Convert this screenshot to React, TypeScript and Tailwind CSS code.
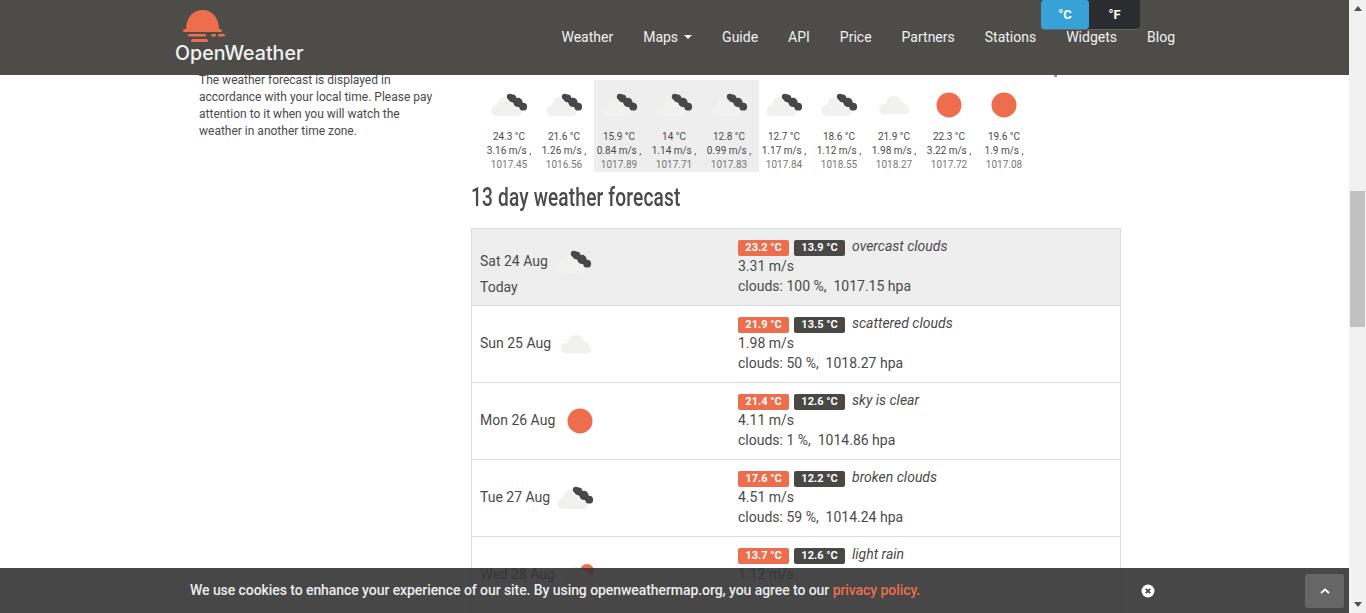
import React from "react";

function LightCloud({ fill = "#f1f1ef" }: { fill?: string }) {
  return (
    <g fill={fill}>
      <circle cx="25" cy="24" r="8" />
      <circle cx="33" cy="27.5" r="5" />
      <circle cx="15" cy="29" r="5.3" />
      <rect x="15" y="27" width="21" height="7.3" />
      <circle cx="36" cy="30" r="4.3" />
    </g>
  );
}

function BigCloud() {
  return (
    <g fill="#f1f1ef">
      <circle cx="21.5" cy="25" r="8.3" />
      <circle cx="30" cy="27" r="6" />
      <circle cx="13" cy="30.5" r="5.5" />
      <circle cx="33" cy="31" r="5" />
      <rect x="13" y="28" width="20" height="8" />
    </g>
  );
}

const blobs: [number, number, number][] = [
  [25.8, 16.8, 3],
  [28.5, 18.3, 3.9],
  [34, 22.4, 4.6],
  [39.2, 26.7, 3.9],
];

function DarkCloud() {
  return (
    <g fill="#48484a">
      {blobs.map(([x, y, r]) => (
        <circle key={x} cx={x} cy={y} r={r} />
      ))}
      <path d="M26 17 L39 26.5" stroke="#48484a" strokeWidth="5.6" fill="none" />
    </g>
  );
}

function Icon({ kind }: { kind: string }) {
  return (
    <svg viewBox="0 0 50 50" className="h-[50px] w-[50px] shrink-0">
      <defs>
        <mask id="cut">
          <rect width="50" height="50" fill="#ffffff" />
          <path d="M26 17 L39 26.5" stroke="#000000" strokeWidth="9" strokeLinecap="round" fill="none" />
        </mask>
      </defs>
      {kind === "dark" && (
        <>
          <g mask="url(#cut)">
            <BigCloud />
          </g>
          <DarkCloud />
        </>
      )}
      {kind === "light" && <LightCloud />}
      {kind === "sun" && <circle cx="25" cy="25" r="12.5" fill="#ec6e4c" />}
      {kind === "rain" && (
        <>
          <circle cx="32" cy="21" r="7" fill="#ec6e4c" />
          <BigCloud />
          <g fill="#48484a">
            <circle cx="18" cy="39" r="0.8" />
            <circle cx="22" cy="38" r="0.8" />
            <circle cx="26" cy="39" r="0.8" />
            <circle cx="20" cy="42" r="0.8" />
            <circle cx="24" cy="42" r="0.8" />
          </g>
        </>
      )}
    </svg>
  );
}

const hours = [
  ["dark", "24.3 °C", "3.16 m/s ,", "1017.45"],
  ["dark", "21.6 °C", "1.26 m/s ,", "1016.56"],
  ["dark", "15.9 °C", "0.84 m/s ,", "1017.89"],
  ["dark", "14 °C", "1.14 m/s ,", "1017.71"],
  ["dark", "12.8 °C", "0.99 m/s ,", "1017.83"],
  ["dark", "12.7 °C", "1.17 m/s ,", "1017.84"],
  ["dark", "18.6 °C", "1.12 m/s ,", "1018.55"],
  ["light", "21.9 °C", "1.98 m/s ,", "1018.27"],
  ["sun", "22.3 °C", "3.22 m/s ,", "1017.72"],
  ["sun", "19.6 °C", "1.9 m/s ,", "1017.08"],
];

const days = [
  { d: "Sat 24 Aug", today: true, i: "dark", hi: "23.2 °C", lo: "13.9 °C", desc: "overcast clouds", w: "3.31 m/s", c: "clouds: 100 %,  1017.15 hpa" },
  { d: "Sun 25 Aug", i: "light", hi: "21.9 °C", lo: "13.5 °C", desc: "scattered clouds", w: "1.98 m/s", c: "clouds: 50 %,  1018.27 hpa" },
  { d: "Mon 26 Aug", i: "sun", hi: "21.4 °C", lo: "12.6 °C", desc: "sky is clear", w: "4.11 m/s", c: "clouds: 1 %,  1014.86 hpa" },
  { d: "Tue 27 Aug", i: "dark", hi: "17.6 °C", lo: "12.2 °C", desc: "broken clouds", w: "4.51 m/s", c: "clouds: 59 %,  1014.24 hpa" },
  { d: "Wed 28 Aug", i: "rain", hi: "13.7 °C", lo: "12.6 °C", desc: "light rain", w: "1.12 m/s", c: "" },
];

const nav = ["Weather", "Maps", "Guide", "API", "Price", "Partners", "Stations", "Widgets", "Blog"];

export default function App() {
  return (
    <div className="relative flex h-[613px] w-[1366px] overflow-hidden bg-white font-[Roboto,sans-serif] text-[#4a4a4a]">
      <div className="relative flex w-[1349px] flex-col">
        <header className="relative z-10 flex h-[75px] shrink-0 items-start justify-between bg-[#4e4c48] pl-[175px] pr-[174px]">
          <div className="flex flex-col pt-[10px]">
            <svg viewBox="0 0 50 33" className="ml-[8px] h-[33px] w-[50px]">
              <path d="M3 20 C3 8 9.5 0 19.5 0 C29.5 0 36 8 36 20 Z" fill="#ec6e4c" />
              <g fill="#ec6e4c">
                <rect x="0" y="19" width="39" height="3" rx="1.5" />
                <rect x="5" y="24" width="18" height="2.6" rx="1.3" />
                <rect x="28" y="24" width="5" height="2.6" rx="1.3" />
                <rect x="35" y="24" width="7" height="2.6" rx="1.3" />
                <rect x="8" y="29" width="17" height="3" rx="1.5" />
              </g>
            </svg>
            <span className="mt-[-2px] font-[Inter,sans-serif] text-[19.6px] font-medium leading-[24px] text-[#f2f2f2]">OpenWeather</span>
          </div>
          <nav className="flex items-center gap-[30px] pt-[28px] text-[14px] leading-[18px] text-[#f2f2f2]">
            {nav.map((n) => (
              <span key={n} className="flex items-center">
                {n}
                {n === "Maps" && <span className="ml-[6px] h-0 w-0 border-x-[4px] border-t-[4px] border-x-transparent border-t-[#f2f2f2]" />}
              </span>
            ))}
          </nav>
          <div className="absolute left-[1041px] top-0 flex h-[30px] w-[99px] rounded-b-[4px] border-b border-[#666666] bg-[#2a2c30] text-[13px] font-bold text-white">
            <span className="flex h-[29px] w-[48px] items-center justify-center rounded-[3px] bg-[#36a2d8]">°C</span>
            <span className="flex w-[51px] items-center justify-center">°F</span>
          </div>
        </header>

        <main className="relative flex flex-1 pl-[199px]">
          <div className="w-[272px] shrink-0">
            <p className="mt-[-3px] w-[240px] text-[12px] leading-[17px]">
              The weather forecast is displayed in accordance with your local time. Please pay attention to it when you will watch the weather in another time zone.
            </p>
          </div>
          <div className="w-[650px]">
            <div className="ml-[13px] mt-[5px] flex">
              {hours.map((h, idx) => (
                <div key={idx} className={`h-[92px] w-[55px] ${idx >= 2 && idx <= 4 ? "bg-[#eeeeee]" : ""}`}>
                  <Icon kind={h[0]} />
                  <div className="w-[50px] whitespace-nowrap text-center text-[10px] leading-[14px]">
                    <div>{h[1]}</div>
                    <div>{h[2]}</div>
                    <div className="text-[#777777]">{h[3]}</div>
                  </div>
                </div>
              ))}
            </div>
            <div className="mt-[7px] h-[49px]">
              <h3 className="inline-block origin-left scale-x-[0.765] whitespace-nowrap text-[25px] font-medium leading-[38px] tracking-[0.2px] text-[#4a4a4a]">13 day weather forecast</h3>
            </div>
            <div className="border-x border-t border-[#dddddd]">
              {days.map((r) => (
                <div key={r.d} className={`flex h-[77px] border-b border-[#dddddd] ${r.today ? "bg-[#eeeeee]" : ""}`}>
                  <div className={`flex w-[266px] shrink-0 flex-col justify-center pl-[8px] text-[14px] ${r.today ? "pt-[14px]" : ""}`}>
                    <div className="flex h-[25px] items-center">
                      <span className="mb-[2px] whitespace-nowrap">{r.d}</span>
                      <span className="-my-[12px]"><Icon kind={r.i} /></span>
                    </div>
                    {r.today && <div className="leading-[24px]">Today</div>}
                  </div>
                  <div className="pt-[10px] text-[14px] leading-[20px]">
                    <div className="flex h-[18px] items-center gap-[5px]">
                      <span className="flex h-[16px] w-[51px] items-center justify-center rounded-[2px] bg-[#ec6e4c] text-[11px] font-bold text-white">{r.hi}</span>
                      <span className="flex h-[16px] w-[51px] items-center justify-center rounded-[2px] bg-[#4a4845] text-[11px] font-bold text-white">{r.lo}</span>
                      <span className="mb-[4px] ml-[2px] italic">{r.desc}</span>
                    </div>
                    <div className="-mt-[1px]">{r.w}</div>
                    <div className="whitespace-pre">{r.c}</div>
                  </div>
                </div>
              ))}
            </div>
          </div>
          <div className="absolute left-[1054px] top-0 h-[2px] w-[3px] bg-[#999999]" />
        </main>

        <div className="absolute bottom-0 left-0 right-0 z-20 flex h-[45px] items-center bg-[#333333]/90 pl-[190px]">
          <p className="whitespace-nowrap text-[14px] font-medium tracking-[-0.07px] text-[#ececec]">
            We use cookies to enhance your experience of our site. By using openweathermap.org, you agree to our{" "}
            <span className="text-[#ec6e4c]">privacy policy.</span>
          </p>
          <svg viewBox="0 0 14 14" className="absolute left-[1141px] top-[16px] h-[14px] w-[14px]">
            <circle cx="7" cy="7" r="6.5" fill="#ffffff" />
            <path d="M4.8 4.8 L9.2 9.2 M9.2 4.8 L4.8 9.2" stroke="#48484a" strokeWidth="1.8" />
          </svg>
        </div>
        <div className="absolute bottom-[5px] left-[1305px] z-30 flex h-[34px] w-[39px] items-center justify-center rounded-[3px] bg-[#666666]">
          <svg viewBox="0 0 10 6" className="h-[6px] w-[10px]">
            <path d="M1 5 L5 1.5 L9 5" fill="none" stroke="#ffffff" strokeWidth="1.8" />
          </svg>
        </div>
      </div>

      <div className="flex w-[17px] shrink-0 flex-col items-center bg-[#f1f1f1]">
        <span className="mt-[6px] h-0 w-0 border-x-[4px] border-b-[5px] border-x-transparent border-b-[#505050]" />
        <div className="mt-[180px] h-[136px] w-[15px] bg-[#c1c1c1]" />
        <span className="mb-[6px] mt-auto h-0 w-0 border-x-[4px] border-t-[5px] border-x-transparent border-t-[#505050]" />
      </div>
    </div>
  );
}
